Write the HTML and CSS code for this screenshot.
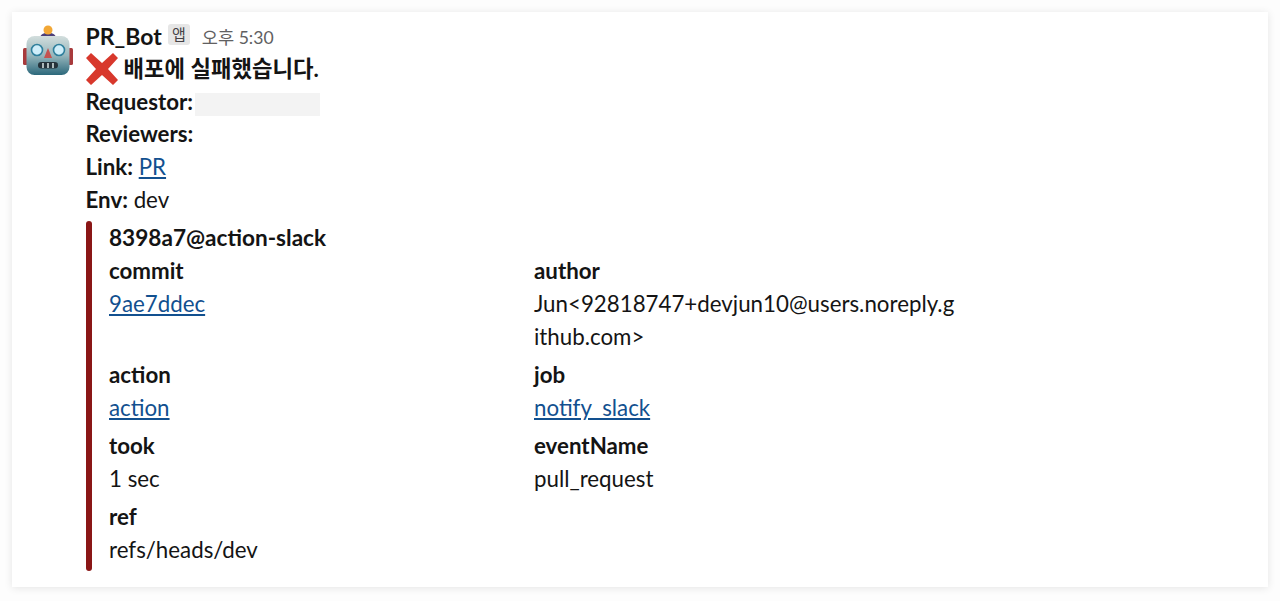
FILE: index.html
```html
<!DOCTYPE html>
<html lang="ko">
<head>
    <meta charset="UTF-8">
    <meta name="viewport" content="width=device-width, initial-scale=1.0">
    <title>PR_Bot</title>
    <link rel="stylesheet" href="styles.css">
</head>
<body>
    <div class="card">
        <svg class="avatar" viewBox="0 0 50 52" aria-hidden="true">
            <defs>
                <linearGradient id="face" x1="0" y1="0" x2="0" y2="1">
                    <stop offset="0" stop-color="#d3dedd"/>
                    <stop offset="0.5" stop-color="#96b6bc"/>
                    <stop offset="1" stop-color="#2c687b"/>
                </linearGradient>
            </defs>
            <rect x="0" y="23" width="5" height="17" rx="1.5" fill="#a83a3c"/>
            <rect x="45" y="23" width="5" height="17" rx="1.5" fill="#a83a3c"/>
            <path d="M17 13 C17 6 33 6 33 13 Z" fill="#4c3f78"/>
            <circle cx="25" cy="5" r="4.5" fill="#f2a735"/>
            <rect x="3.5" y="11" width="43" height="39" rx="8" fill="url(#face)"/>
            <circle cx="14" cy="25" r="5.5" fill="#cfeefa" stroke="#2f7f9c" stroke-width="1.6"/>
            <circle cx="36" cy="25" r="5.5" fill="#cfeefa" stroke="#2f7f9c" stroke-width="1.6"/>
            <path d="M25 23 L29 33 H21 Z" fill="#c4524f"/>
            <rect x="15" y="37" width="20" height="6.5" rx="3.2" fill="#25323a"/>
            <path d="M20 38 V43 M25 38 V43 M30 38 V43" stroke="#cfdcdc" stroke-width="1.6"/>
        </svg>
        <div class="message">
            <div class="meta">
                <span class="sender">PR_Bot</span>
                <span class="badge">앱</span>
                <span class="time">오후 5:30</span>
            </div>
            <div class="headline">
                <svg class="cross" viewBox="0 0 32 32" aria-hidden="true">
                    <path d="M5 0 L16 10 L27 0 L32 5 L22 16 L32 27 L27 32 L16 22 L5 32 L0 27 L10 16 L0 5 Z" fill="#d8382c"/>
                </svg>
                <b>배포에 실패했습니다.</b>
            </div>
            <div class="line"><b>Requestor:</b><span class="redacted"></span></div>
            <div class="line"><b>Reviewers:</b></div>
            <div class="line"><b>Link:</b> <a href="#">PR</a></div>
            <div class="line"><b>Env:</b> dev</div>

            <div class="attachment">
                <div class="bar"></div>
                <div class="attachment-body">
                    <div class="attachment-title"><b>8398a7@action-slack</b></div>
                    <div class="fields">
                        <div class="field">
                            <b>commit</b>
                            <a href="#">9ae7ddec</a>
                        </div>
                        <div class="field">
                            <b>author</b>
                            <span>Jun&lt;92818747+devjun10@users.noreply.github.com&gt;</span>
                        </div>
                        <div class="field">
                            <b>action</b>
                            <a href="#">action</a>
                        </div>
                        <div class="field">
                            <b>job</b>
                            <a href="#">notify_slack</a>
                        </div>
                        <div class="field">
                            <b>took</b>
                            <span>1 sec</span>
                        </div>
                        <div class="field">
                            <b>eventName</b>
                            <span>pull_request</span>
                        </div>
                        <div class="field">
                            <b>ref</b>
                            <span>refs/heads/dev</span>
                        </div>
                    </div>
                </div>
            </div>
        </div>
    </div>
</body>
</html>
```

FILE: styles.css
```css
* {
    margin: 0;
    padding: 0;
    box-sizing: border-box;
}

body {
    background: #fdfdfd;
    padding: 12px;
    height: 601px;
    overflow: hidden;
    font-family: Lato, "Noto Sans CJK KR", sans-serif;
    font-size: 22.3px;
    line-height: 32.7px;
    color: #141414;
}

.card {
    display: flex;
    align-items: flex-start;
    height: 575px;
    padding: 8px 11px;
    background: #ffffff;
    box-shadow: 0 1px 8px rgba(0, 0, 0, 0.1);
}

.avatar {
    width: 50px;
    height: 52px;
    margin-top: 5px;
    flex-shrink: 0;
}

.message {
    margin-left: 12.5px;
    margin-top: -0.5px;
    flex: 1;
}

.meta {
    display: flex;
    align-items: center;
    height: 33px;
}

.sender {
    font-weight: 700;
    font-size: 23px;
}

.badge {
    margin-left: 6px;
    margin-bottom: 4px;
    width: 22px;
    height: 21px;
    line-height: 21px;
    text-align: center;
    font-size: 15px;
    background: #e6e6e6;
    border-radius: 3px;
    color: #454245;
}

.time {
    margin-left: 12px;
    margin-top: 4px;
    font-size: 17.6px;
    color: #616061;
}

.headline {
    display: flex;
    align-items: center;
    height: 33px;
}

.cross {
    width: 32px;
    height: 32px;
    margin-right: 6px;
}

.line {
    height: 32.7px;
}

.redacted {
    display: inline-block;
    width: 125px;
    height: 23px;
    margin-left: 1.5px;
    vertical-align: -6px;
    background: #f3f3f3;
}

a {
    color: #12508f;
}

.attachment {
    display: flex;
    margin-top: 5px;
    margin-left: 0.5px;
    height: 350px;
}

.bar {
    width: 6px;
    background: #8a1616;
    border-radius: 3px;
}

.attachment-body {
    margin-left: 17px;
    padding-top: 0.5px;
}

.attachment-title {
    height: 33.2px;
    font-size: 22.6px;
}

.fields {
    display: grid;
    grid-template-columns: 425px 425px;
    row-gap: 5.5px;
    line-height: 32.8px;
}

.field {
    display: flex;
    flex-direction: column;
    align-items: flex-start;
    word-break: break-all;
}
```
